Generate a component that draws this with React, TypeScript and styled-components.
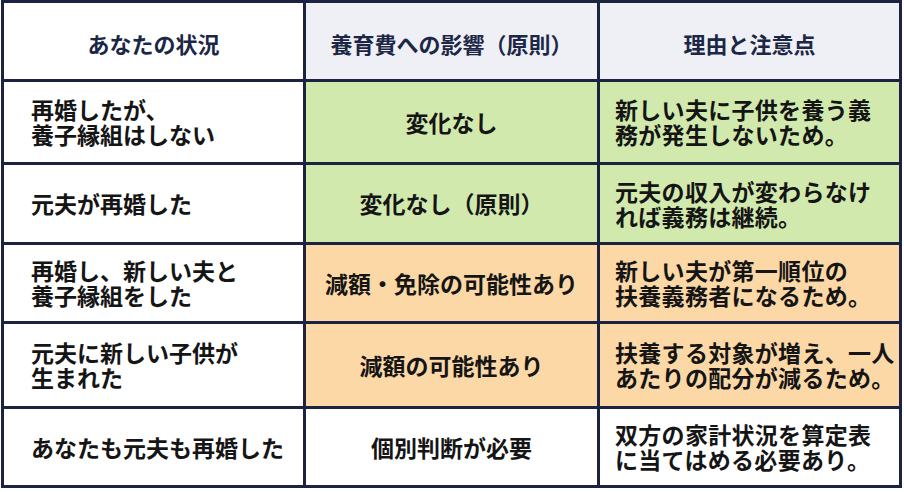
import { Fragment } from "react";
import styled, { createGlobalStyle } from "styled-components";

const GlobalStyle = createGlobalStyle`
  html, body {
    margin: 0;
    padding: 0;
    background: #ffffff;
  }
  body {
    font-family: "Noto Sans CJK JP", "Noto Sans", sans-serif;
  }
`;

const Page = styled.div`
  padding: 0 0 0 1px;
  width: 904px;
  height: 492px;
  box-sizing: border-box;
`;

const Table = styled.div`
  display: grid;
  grid-template-columns: 299px 291px 299px;
  grid-template-rows: 76px 80px 77px 76px 82px 76px;
  gap: 3px;
  padding: 3px;
  width: max-content;
  background: #1b2340;
`;

type Tone = "white" | "head" | "green" | "orange";
type Align = "left" | "center" | "note";

const toneColor: Record<Tone, string> = {
  white: "#ffffff",
  head: "#eef0f6",
  green: "#d2e9ae",
  orange: "#fcd8a6",
};

const Cell = styled.div<{ $tone: Tone; $align: Align }>`
  display: flex;
  align-items: center;
  justify-content: ${(p) => (p.$align === "center" ? "center" : "flex-start")};
  text-align: ${(p) => (p.$align === "center" ? "center" : "left")};
  padding: ${(p) =>
    p.$align === "left" ? "0 0 0 27px" : p.$align === "note" ? "0 0 0 15px" : "0"};
  background: ${(p) => toneColor[p.$tone]};
  color: #151515;
  font-size: 23px;
  font-weight: 700;
  line-height: 25px;
  letter-spacing: ${(p) => (p.$align === "note" ? "0.3px" : "0")};
  white-space: pre;
  overflow: visible;
`;

const HeadCell = styled.div<{ $tone: Tone }>`
  display: flex;
  align-items: center;
  justify-content: center;
  padding-top: 4px;
  background: ${(p) => toneColor[p.$tone]};
  color: #1c2745;
  font-size: 22px;
  font-weight: 600;
`;

type Row = {
  situation: string;
  effect: string;
  note: string;
  tone: Tone;
};

const rows: Row[] = [
  {
    situation: "再婚したが、\n養子縁組はしない",
    effect: "変化なし",
    note: "新しい夫に子供を養う義\n務が発生しないため。",
    tone: "green",
  },
  {
    situation: "元夫が再婚した",
    effect: "変化なし（原則）",
    note: "元夫の収入が変わらなけ\nれば義務は継続。",
    tone: "green",
  },
  {
    situation: "再婚し、新しい夫と\n養子縁組をした",
    effect: "減額・免除の可能性あり",
    note: "新しい夫が第一順位の\n扶養義務者になるため。",
    tone: "orange",
  },
  {
    situation: "元夫に新しい子供が\n生まれた",
    effect: "減額の可能性あり",
    note: "扶養する対象が増え、一人\nあたりの配分が減るため。",
    tone: "orange",
  },
  {
    situation: "あなたも元夫も再婚した",
    effect: "個別判断が必要",
    note: "双方の家計状況を算定表\nに当てはめる必要あり。",
    tone: "white",
  },
];

export default function App() {
  return (
    <>
      <GlobalStyle />
      <Page>
        <Table>
          <HeadCell $tone="white">あなたの状況</HeadCell>
          <HeadCell $tone="head">養育費への影響（原則）</HeadCell>
          <HeadCell $tone="head">理由と注意点</HeadCell>
          {rows.map((r) => (
            <Fragment key={r.situation}>
              <Cell $tone="white" $align="left">
                {r.situation}
              </Cell>
              <Cell $tone={r.tone} $align="center">
                {r.effect}
              </Cell>
              <Cell $tone={r.tone} $align="note">
                {r.note}
              </Cell>
            </Fragment>
          ))}
        </Table>
      </Page>
    </>
  );
}
